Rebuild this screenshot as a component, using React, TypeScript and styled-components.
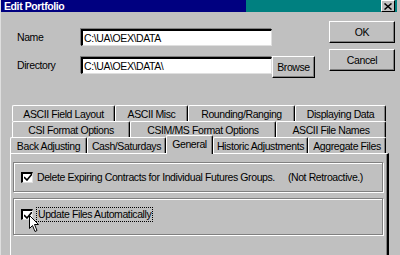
import React from 'react';
import styled, {createGlobalStyle} from "styled-components";

const FONT = '"Liberation Sans", Arial, sans-serif'

const GlobalStyle = createGlobalStyle`
  html, body {
    margin: 0;
    padding: 0;
    background: #c0c0c0;
  }
  body {
    font-family: ${FONT};
    font-size: 10.5px;
    letter-spacing: -0.4px;
    color: #000;
  }
`

const tabRows = [
    {indent: 2, tabs: [['ASCII Field Layout', 103], ['ASCII Misc', 73], ['Rounding/Ranging', 107], ['Displaying Data', 91]]},
    {indent: 2, tabs: [['CSI Format Options', 118], ['CSIM/MS Format Options', 146], ['ASCII File Names', 110]]},
    {indent: 0, tabs: [['Back Adjusting', 77], ['Cash/Saturdays', 79], ['General', 47], ['Historic Adjustments', 95], ['Aggregate Files', 78]]},
] as const

function Check() {
    return (
        <CheckBox>
            <svg width="8" height="7" viewBox="0 0 8 7">
                <path d="M0 3 L3 6 L8 0" stroke="#000" strokeWidth="1.6" fill="none"/>
            </svg>
        </CheckBox>
    )
}

function App() {
    return (
        <Window>
            <GlobalStyle/>
            <TitleBar>
                <Title>Edit Portfolio</Title>
                <CloseBox>
                    <svg width="8" height="7" viewBox="0 0 8 7">
                        <path d="M0.5 0.5 L7.5 6.5 M7.5 0.5 L0.5 6.5" stroke="#000" strokeWidth="1.5"/>
                    </svg>
                </CloseBox>
            </TitleBar>
            <Content>
                <TopArea>
                    <Fields>
                        <FieldRow>
                            <Label>Name</Label>
                            <TextBox>C:\UA\OEX\DATA</TextBox>
                        </FieldRow>
                        <FieldRow>
                            <Label>Directory</Label>
                            <TextBox>C:\UA\OEX\DATA\</TextBox>
                            <Button $w={43} $up>Browse</Button>
                        </FieldRow>
                    </Fields>
                    <ButtonStack>
                        <Button $w={66}>OK</Button>
                        <Button $w={66}>Cancel</Button>
                    </ButtonStack>
                </TopArea>
                <TabControl>
                    {tabRows.map((row, i) => (
                        <TabRow key={i} $indent={row.indent}>
                            {row.tabs.map(([name, w]) => (
                                <Tab key={name} $w={w} $active={name === 'General'}>{name}</Tab>
                            ))}
                        </TabRow>
                    ))}
                    <Panel>
                        <Group $h={30}>
                            <Check/>
                            <CheckText>Delete Expiring Contracts for Individual Futures Groups.</CheckText>
                            <Note>(Not Retroactive.)</Note>
                        </Group>
                        <Group $h={37} $top={10}>
                            <CursorHolder>
                                <Check/>
                                <Cursor width="12" height="18" viewBox="0 0 12 18">
                                    <path d="M0.5 0.5 L0.5 13.5 L3.5 10.5 L6 16.5 L8 15.5 L5.5 9.5 L9.5 9.5 Z"
                                          fill="#fff" stroke="#000" strokeWidth="1"/>
                                </Cursor>
                            </CursorHolder>
                            <FocusText>Update Files Automatically</FocusText>
                        </Group>
                    </Panel>
                </TabControl>
            </Content>
        </Window>
    );
}

export default App;

const Window = styled.div`
  width: 400px;
  height: 255px;
  box-sizing: border-box;
  border-left: 1px solid #dfdfdf;
  background: #c0c0c0;
  overflow: hidden;
  display: flex;
  flex-direction: column;
`

const TitleBar = styled.div`
  height: 16px;
  margin-right: 3px;
  display: flex;
  align-items: center;
  background: linear-gradient(to right, #000080 0, #000080 245px, #008080 245px);
`

const Title = styled.div`
  flex: 1;
  padding-left: 3px;
  color: #fff;
  font-weight: bold;
  font-size: 10.5px;
`

const CloseBox = styled.div`
  width: 14px;
  height: 12px;
  margin-right: 2px;
  box-sizing: border-box;
  background: #c0c0c0;
  border-top: 1px solid #fff;
  border-left: 1px solid #fff;
  border-right: 1px solid #000;
  border-bottom: 1px solid #000;
  display: flex;
  align-items: center;
  justify-content: center;
`

const Content = styled.div`
  flex: 1;
  display: flex;
  flex-direction: column;
`

const TopArea = styled.div`
  height: 93px;
  display: flex;
`

const Fields = styled.div`
  padding: 17px 0 0 16px;
  display: flex;
  flex-direction: column;
  gap: 11px;
`

const FieldRow = styled.div`
  display: flex;
  align-items: flex-start;
`

const Label = styled.div`
  width: 64px;
  padding-top: 1px;
  line-height: 15px;
`

const TextBox = styled.div`
  width: 191px;
  height: 17px;
  box-sizing: border-box;
  background: #fff;
  border-top: 2px solid #000;
  border-left: 2px solid #000;
  border-right: 1px solid #dfdfdf;
  border-bottom: 1px solid #dfdfdf;
  box-shadow: -1px -1px 0 #808080;
  padding-left: 1px;
  line-height: 14px;
  white-space: nowrap;
`

const Button = styled.div<{ $w: number; $up?: boolean }>`
  width: ${p => p.$w}px;
  height: 22px;
  margin-top: ${p => p.$up ? -1 : 0}px;
  box-sizing: border-box;
  background: #c0c0c0;
  border-top: 1px solid #fff;
  border-left: 1px solid #fff;
  border-right: 1px solid #000;
  border-bottom: 1px solid #000;
  box-shadow: inset -1px -1px 0 #808080;
  display: flex;
  align-items: center;
  justify-content: center;
`

const ButtonStack = styled.div`
  margin-left: auto;
  margin-right: 5px;
  padding-top: 9px;
  display: flex;
  flex-direction: column;
  gap: 6px;
`

const TabControl = styled.div`
  margin-left: 9px;
  width: 379px;
  display: flex;
  flex-direction: column;
`

const TabRow = styled.div<{ $indent: number }>`
  height: 16px;
  padding-left: ${p => p.$indent}px;
  display: flex;
  align-items: flex-end;
`

const Tab = styled.div<{ $w: number; $active?: boolean }>`
  width: ${p => p.$w}px;
  height: ${p => p.$active ? 19 : 16}px;
  margin-top: ${p => p.$active ? -2 : 0}px;
  margin-bottom: ${p => p.$active ? -1 : 0}px;
  position: relative;
  z-index: ${p => p.$active ? 1 : 0};
  box-sizing: border-box;
  background: #c0c0c0;
  border-top: 1px solid #fff;
  border-left: 1px solid #fff;
  border-right: 1px solid #000;
  border-radius: 2px 2px 0 0;
  box-shadow: inset -1px 0 0 #808080;
  display: flex;
  align-items: ${p => p.$active ? 'flex-start' : 'center'};
  padding-top: ${p => p.$active ? 2 : 0}px;
  justify-content: center;
  white-space: nowrap;
`

const Panel = styled.div`
  height: 110px;
  box-sizing: border-box;
  border-top: 1px solid #fff;
  border-left: 1px solid #fff;
  border-right: 2px solid #000;
  box-shadow: inset -1px 0 0 #808080;
  padding: 8px 4px 0 2px;
  display: flex;
  flex-direction: column;
  gap: 6px;
`

const Group = styled.div<{ $h: number; $top?: number }>`
  height: ${p => p.$h}px;
  box-sizing: border-box;
  border: 1px solid #808080;
  box-shadow: inset 1px 1px 0 #fff, 1px 1px 0 #fff;
  padding: ${p => p.$top ?? 0}px 0 0 7px;
  display: flex;
  align-items: ${p => p.$top ? 'flex-start' : 'center'};
`

const CheckBox = styled.div`
  width: 12px;
  height: 11px;
  box-sizing: border-box;
  background: #fff;
  border-top: 2px solid #000;
  border-left: 2px solid #000;
  border-right: 1px solid #dfdfdf;
  border-bottom: 1px solid #dfdfdf;
  display: flex;
  align-items: center;
  justify-content: center;
`

const CheckText = styled.span`
  margin-left: 4px;
  white-space: nowrap;
`

const Note = styled.span`
  margin-left: 13px;
  white-space: nowrap;
`

const CursorHolder = styled.div`
  position: relative;
`

const Cursor = styled.svg`
  position: absolute;
  left: 8px;
  top: 6px;
`

const FocusText = styled.span`
  margin: -2px 0 0 3px;
  padding: 0 1px;
  line-height: 13px;
  border: 1px dotted #000;
  white-space: nowrap;
`
